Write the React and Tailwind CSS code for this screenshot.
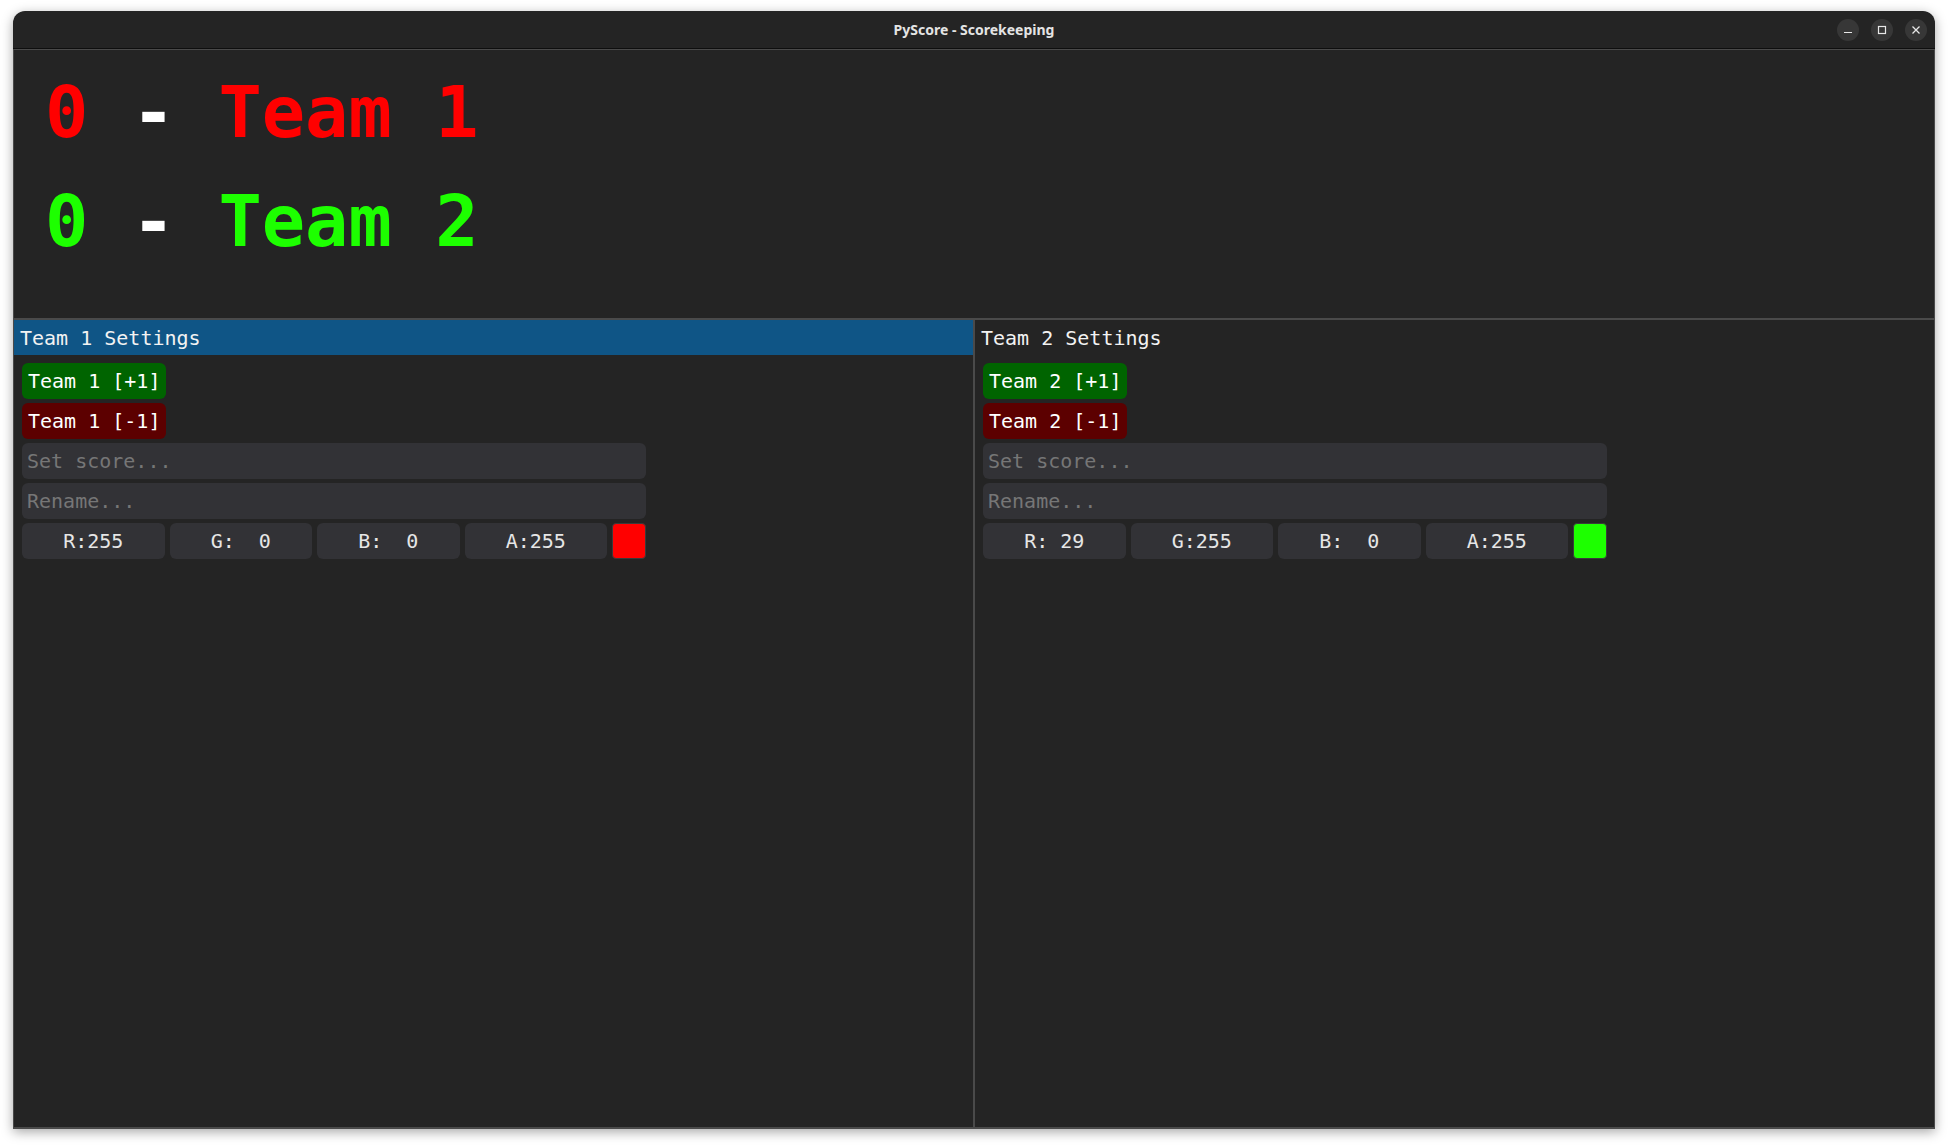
import React from "react";

const teams = [
  { name: "Team 1", score: 0, color: "#ff0000", rgba: ["R:255", "G:  0", "B:  0", "A:255"], active: true },
  { name: "Team 2", score: 0, color: "#1dff00", rgba: ["R: 29", "G:255", "B:  0", "A:255"], active: false },
];

const mono = { fontFamily: '"DejaVu Sans Mono", "Liberation Mono", monospace' };

const TeamPanel = ({ team }) => (
  <div className="flex-1 flex flex-col" style={mono}>
    <div
      className={
        "h-[35px] flex items-center px-[6px] text-[20px] text-[#f2f2f2] " +
        (team.active ? "bg-[#0f5586]" : "")
      }
    >
      {team.name} Settings
    </div>
    <div className="flex flex-col gap-[4px] pt-[8px] px-[8px] text-[20px]">
      <button className="self-start h-[36px] px-[6px] rounded-[6px] bg-[#006400] text-white">
        {team.name} [+1]
      </button>
      <button className="self-start h-[36px] px-[6px] rounded-[6px] bg-[#5c0000] text-white">
        {team.name} [-1]
      </button>
      <input
        placeholder="Set score..."
        className="w-[624px] h-[36px] px-[5px] rounded-[6px] bg-[#323236] text-[#e6e6e6] placeholder-[#767676] outline-none"
        style={mono}
      />
      <input
        placeholder="Rename..."
        className="w-[624px] h-[36px] px-[5px] rounded-[6px] bg-[#323236] text-[#e6e6e6] placeholder-[#767676] outline-none"
        style={mono}
      />
      <div className="w-[624px] h-[36px] flex gap-[5px]">
        {team.rgba.map((c) => (
          <div
            key={c}
            className="flex-1 rounded-[6px] bg-[#323236] text-[#e6e6e6] flex items-center justify-center whitespace-pre"
          >
            {c}
          </div>
        ))}
        <div
          className="w-[34px] rounded-[4px] border border-[#3a3a3a]"
          style={{ backgroundColor: team.color }}
        ></div>
      </div>
    </div>
  </div>
);

const App = () => {
  return (
    <div className="w-[1948px] h-[1146px] bg-white pt-[11px] pl-[13px] overflow-hidden">
      <div className="w-[1922px] h-[1118px] rounded-t-[12px] overflow-hidden flex flex-col shadow-[0_3px_12px_rgba(0,0,0,0.35)]">
        {/* title bar */}
        <div className="h-[38px] shrink-0 bg-[#242424] border-b border-[#0e0e0e] relative flex items-center justify-center">
          <span
            className="text-[14px] font-bold text-[#e4e4e4]"
            style={{ fontFamily: '"Noto Sans", "Open Sans", sans-serif' }}
          >
            PyScore - Scorekeeping
          </span>
          <div className="absolute right-[8px] top-[8px] flex gap-[12px]">
            <div className="w-[22px] h-[22px] rounded-full bg-[#373737] flex items-center justify-center">
              <svg width="10" height="10" viewBox="0 0 10 10">
                <path d="M1 7.5h8" stroke="#e8e8e8" strokeWidth="1.2" />
              </svg>
            </div>
            <div className="w-[22px] h-[22px] rounded-full bg-[#373737] flex items-center justify-center">
              <svg width="10" height="10" viewBox="0 0 10 10">
                <rect x="1.5" y="1.5" width="7" height="7" fill="none" stroke="#e8e8e8" strokeWidth="1.2" />
              </svg>
            </div>
            <div className="w-[22px] h-[22px] rounded-full bg-[#373737] flex items-center justify-center">
              <svg width="10" height="10" viewBox="0 0 10 10">
                <path d="M1.5 1.5l7 7M8.5 1.5l-7 7" stroke="#e8e8e8" strokeWidth="1.3" />
              </svg>
            </div>
          </div>
        </div>

        {/* content */}
        <div className="flex-1 flex flex-col bg-[#242424] border-x border-t border-b-2 border-[#4a4a4a]">
          <div
            className="h-[268px] shrink-0 pt-[8px] pl-[31px] font-bold text-[72px] leading-[109px] whitespace-pre"
            style={mono}
          >
            {teams.map((t) => (
              <div key={t.name}>
                <span style={{ color: t.color }}>{t.score}</span>
                <span className="text-white"> - </span>
                <span style={{ color: t.color }}>{t.name}</span>
              </div>
            ))}
          </div>
          <div className="flex-1 flex border-t-2 border-[#4a4a4a]">
            <TeamPanel team={teams[0]} />
            <div className="w-[2px] bg-[#4a4a4a]"></div>
            <TeamPanel team={teams[1]} />
          </div>
        </div>
      </div>
    </div>
  );
};

export default App;
